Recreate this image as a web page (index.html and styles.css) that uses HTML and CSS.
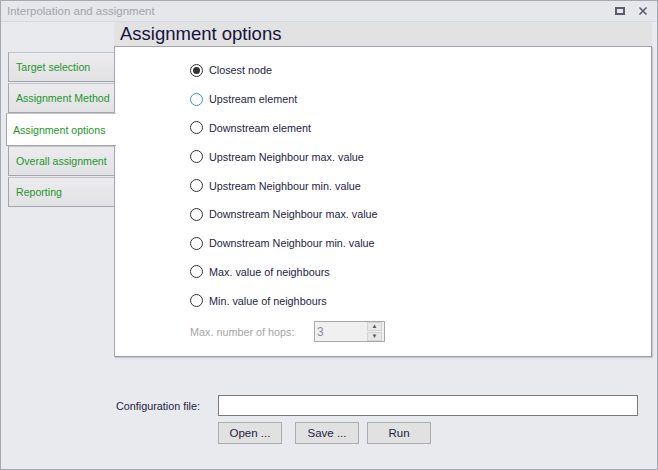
FILE: index.html
```html
<!DOCTYPE html>
<html lang="en">
<head>
  <meta charset="UTF-8">
  <title>Interpolation and assignment</title>
  <link rel="stylesheet" href="styles.css">
</head>
<body>
  <div class="window">
    <div class="titlebar">
      <span class="title">Interpolation and assignment</span>
      <span class="title-buttons">
        <svg width="10" height="8" viewBox="0 0 10 8"><rect x="1" y="1" width="8" height="6" fill="none" stroke="#5a5c6c" stroke-width="2"/></svg>
        <svg width="10" height="10" viewBox="0 0 10 10"><path d="M1.5 1.5 L8.5 8.5 M8.5 1.5 L1.5 8.5" stroke="#5a5c6c" stroke-width="1.6"/></svg>
      </span>
    </div>

    <div class="main">
      <div class="tabs">
        <div class="tab">Target selection</div>
        <div class="tab">Assignment Method</div>
        <div class="tab active">Assignment options</div>
        <div class="tab">Overall assignment</div>
        <div class="tab">Reporting</div>
      </div>

      <div class="page">
        <div class="page-title">Assignment options</div>
        <div class="page-body">
          <div class="options">
            <label class="option"><span class="radio checked"></span>Closest node</label>
            <label class="option"><span class="radio focused"></span>Upstream element</label>
            <label class="option"><span class="radio"></span>Downstream element</label>
            <label class="option"><span class="radio"></span>Upstream Neighbour max. value</label>
            <label class="option"><span class="radio"></span>Upstream Neighbour min. value</label>
            <label class="option"><span class="radio"></span>Downstream Neighbour max. value</label>
            <label class="option"><span class="radio"></span>Downstream Neighbour min. value</label>
            <label class="option"><span class="radio"></span>Max. value of neighbours</label>
            <label class="option"><span class="radio"></span>Min. value of neighbours</label>
          </div>
          <div class="hops">
            <span class="hops-label">Max. number of hops:</span>
            <div class="spinner">
              <span class="spinner-value">3</span>
              <span class="spinner-buttons">
                <span class="spin-btn">&#9650;</span>
                <span class="spin-btn">&#9660;</span>
              </span>
            </div>
          </div>
        </div>
      </div>
    </div>

    <div class="config">
      <div class="config-row">
        <span class="config-label">Configuration file:</span>
        <input type="text" class="config-input">
      </div>
      <div class="config-buttons">
        <button>Open ...</button>
        <button>Save ...</button>
        <button>Run</button>
      </div>
    </div>
  </div>
</body>
</html>
```

FILE: styles.css
```css
body {
  margin: 0;
  font-family: "Liberation Sans", Arial, sans-serif;
  font-size: 10.8px;
  color: #1e1e46;
}
.window {
  width: 658px;
  height: 470px;
  box-sizing: border-box;
  border: 1px solid #a6a8b4;
  background-color: #e9eaee;
  display: flex;
  flex-direction: column;
}
.titlebar {
  height: 20px;
  border-bottom: 1px solid #d8d9de;
  background-color: #e6e7eb;
  display: flex;
  align-items: center;
  justify-content: space-between;
  padding: 0 6px;
}
.title {
  color: #a2a3ab;
  font-size: 11.5px;
}
.title-buttons {
  display: flex;
  gap: 13px;
  align-items: center;
  padding-right: 3px;
}
.main {
  display: flex;
  padding: 0 5px 0 7px;
}
.tabs {
  width: 107px;
  margin-right: -1px;
  padding-top: 30px;
  display: flex;
  flex-direction: column;
}
.tab {
  height: 30px;
  box-sizing: border-box;
  border: 1px solid #a4a5b0;
  border-top-color: #c4c5cc;
  background: linear-gradient(to bottom, #ececee, #e2e2e5);
  color: #23962a;
  font-size: 10.6px;
  padding-left: 7px;
  display: flex;
  align-items: center;
  white-space: nowrap;
  overflow: hidden;
  margin-bottom: 1px;
}
.tab.active {
  height: 33px;
  margin: -1px 0 0 -2px;
  width: 110px;
  background: #fff;
  border-right: none;
  padding-left: 6px;
  position: relative;
  z-index: 1;
}
.page {
  flex: 1;
  display: flex;
  flex-direction: column;
}
.page-title {
  height: 24px;
  background-color: #e2e2e2;
  font-size: 18.5px;
  color: #14143c;
  padding-left: 6px;
  display: flex;
  align-items: center;
}
.page-body {
  height: 311px;
  box-sizing: border-box;
  background: #fff;
  border: 1px solid #a4a5b0;
  border-right-color: #9a9ba6;
  border-bottom-color: #9a9ba6;
  box-shadow: 1px 1px 1px #c8c9d0;
  padding: 16px 0 0 75px;
}
.options {
  display: flex;
  flex-direction: column;
}
.option {
  height: 28.8px;
  display: flex;
  align-items: center;
  gap: 6px;
  margin-top: -7px;
  margin-bottom: 7px;
}
.radio {
  width: 11px;
  height: 11px;
  border: 1px solid #333;
  border-radius: 50%;
  display: flex;
  align-items: center;
  justify-content: center;
}
.radio.focused {
  border-color: #3a8ee0;
}
.radio.checked::after {
  content: "";
  width: 7px;
  height: 7px;
  border-radius: 50%;
  background: #333;
}
.hops {
  display: flex;
  align-items: center;
  margin-top: -1px;
}
.hops-label {
  color: #a6a6a6;
  width: 124px;
}
.spinner {
  width: 71px;
  height: 21px;
  box-sizing: border-box;
  border: 1px solid #a8a8a8;
  background: #f0f0f0;
  display: flex;
  justify-content: space-between;
  align-items: center;
  padding: 0 2px 0 2px;
}
.spinner-value {
  color: #8a8aa0;
  font-size: 12px;
}
.spinner-buttons {
  display: flex;
  flex-direction: column;
  gap: 1px;
}
.spin-btn {
  width: 13px;
  height: 7px;
  background: #e8e8e8;
  border: 1px solid #d4d4d4;
  font-size: 6px;
  color: #555;
  line-height: 7px;
  text-align: center;
}
.config {
  padding: 38px 0 0 115px;
  display: flex;
  flex-direction: column;
}
.config-row {
  display: flex;
  align-items: center;
}
.config-label {
  width: 102px;
}
.config-input {
  width: 420px;
  height: 21px;
  box-sizing: border-box;
  border: 1px solid #7a7a7a;
  margin: 0;
  padding: 0;
}
.config-buttons {
  display: flex;
  padding-left: 102px;
  margin-top: 6px;
  gap: 13px;
}
button {
  width: 64px;
  height: 22px;
  background: #e1e1e1;
  border: 1px solid #adadad;
  font-family: "Liberation Sans", Arial, sans-serif;
  font-size: 11.5px;
  color: #1e1e46;
  padding: 0;
}
button:nth-child(3) {
  margin-left: -5px;
}
```
